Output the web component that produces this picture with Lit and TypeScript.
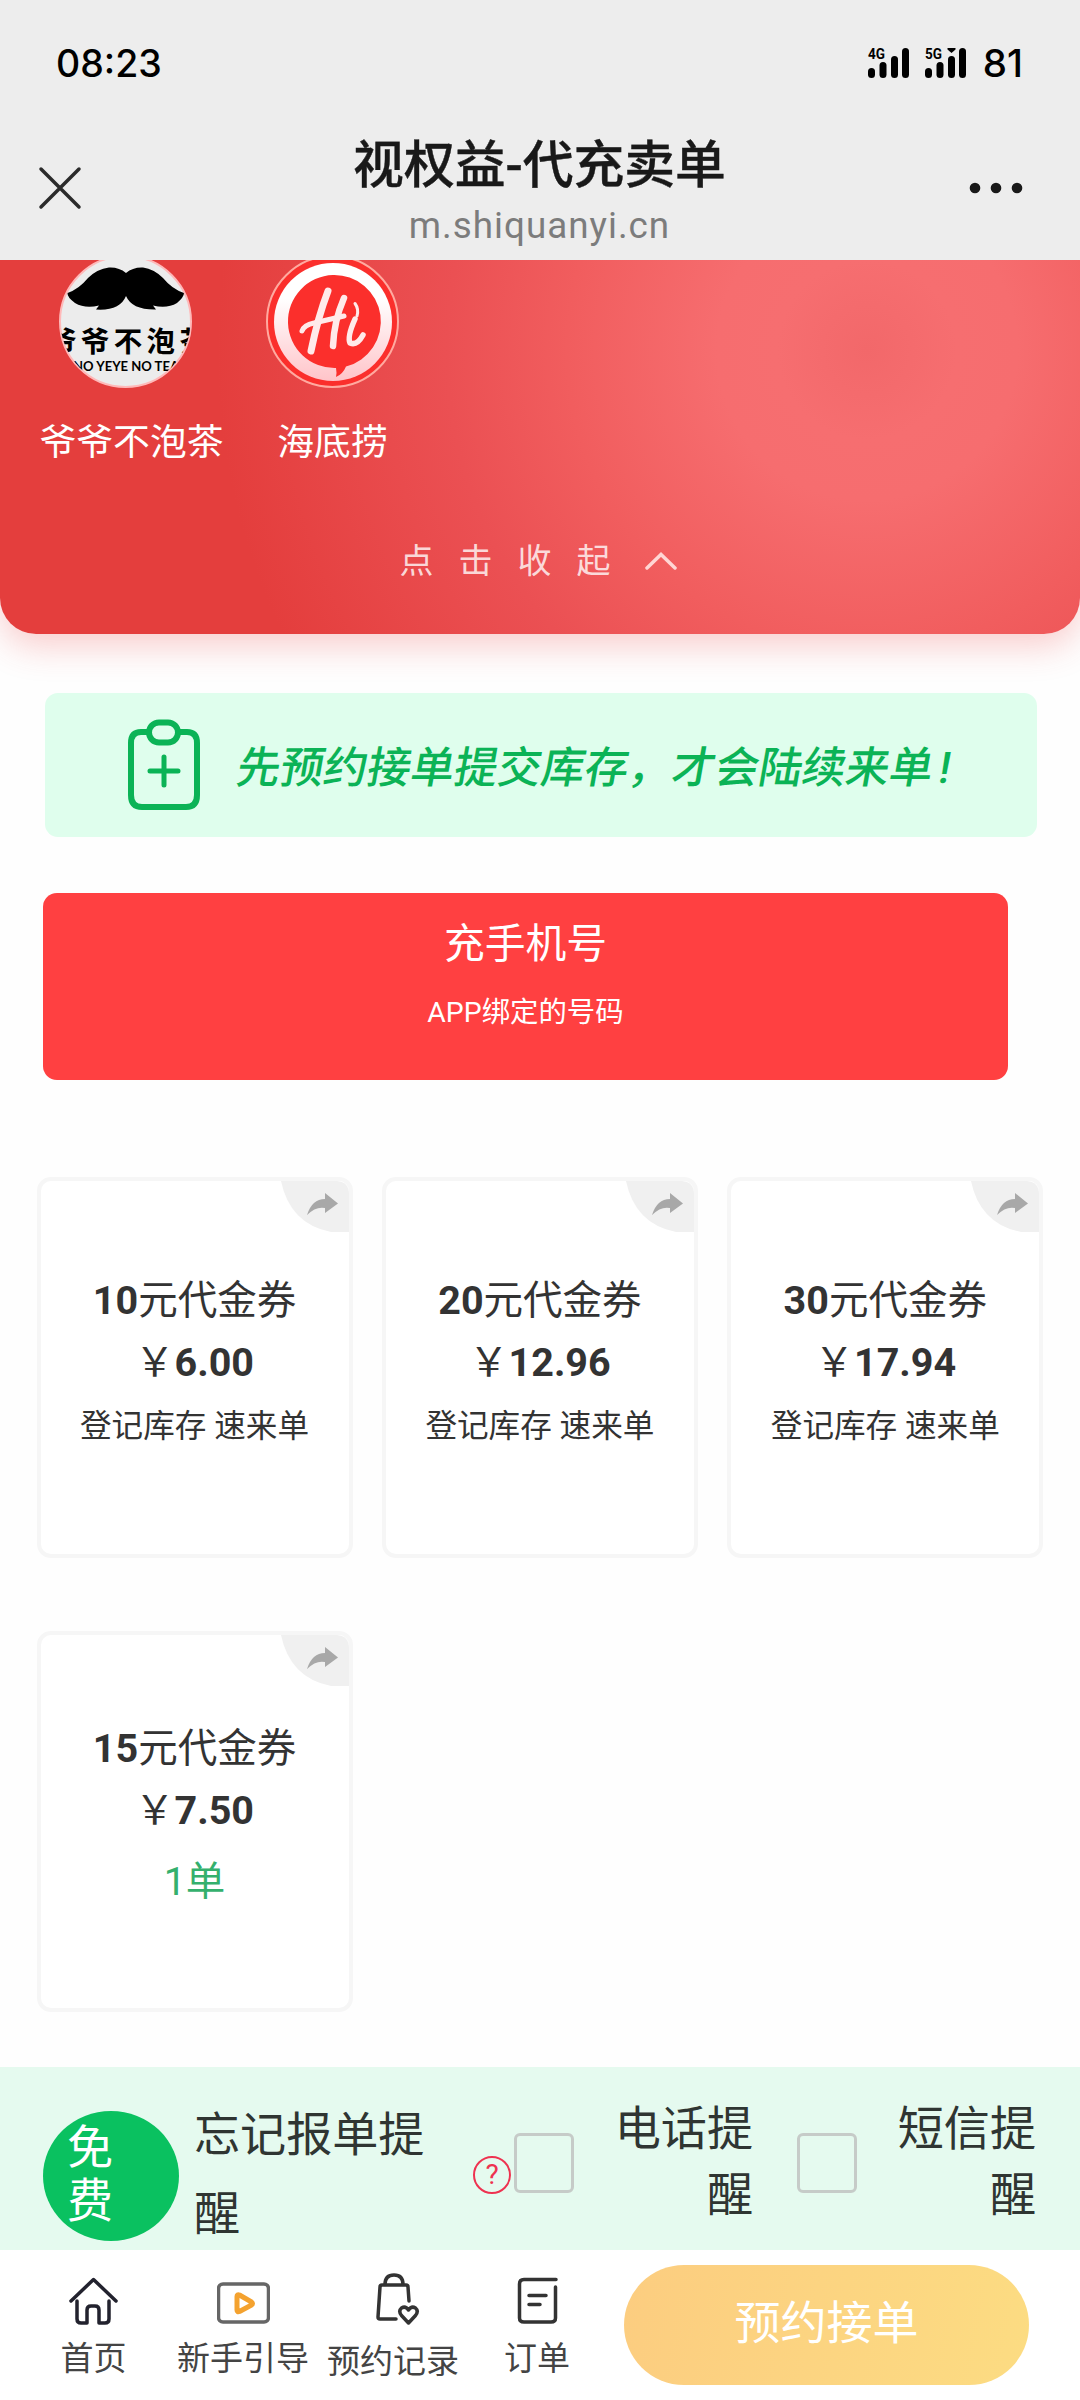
import { LitElement, html, css, svg, nothing } from 'lit';
import { customElement, property } from 'lit/decorators.js';

interface Voucher {
  amount: string;
  price: string;
  stock?: string;
}

const vouchers: Voucher[] = [
  { amount: '10', price: '6.00' },
  { amount: '20', price: '12.96' },
  { amount: '30', price: '17.94' },
  { amount: '15', price: '7.50', stock: '1单' },
];

const homeIcon = svg`
  <path d="M2 24 L24.5 2.500 L47 24" />
  <path d="M8 24 V42 Q8 46 12 46 H18 V33 Q18 29 22 29 H26 Q30 29 30 33 V46 H36 Q40 46 40 42 V24" />`;

const guideIcon = svg`
  <rect x="1.500" y="8" width="50" height="38" rx="4.500" stroke="#666" />
  <path d="M20 20.500 Q20 18 22.500 19 L34.500 26 Q36.500 27.500 34.500 29 L22.500 35.500 Q20 36.500 20 34 Z" stroke="#f4a22f" stroke-width="5" />`;

const bagIcon = svg`
  <path d="M9 11.500 Q9 2 18 2 Q27 2 27 11.500" />
  <path d="M33 28 L32 14 Q32 12 30 12 H6 Q4 12 4 14 L2 44 Q2 46 4 46 H20" />
  <path d="M32.500 50 L25.500 42.500 Q22 38 25.500 35 Q29.500 32.500 32.500 37 Q35.500 32.500 39.500 35 Q43 38 39.500 42.500 Z" />`;

const orderIcon = svg`
  <path d="M39 2.500 H7 Q2.500 2.500 2.500 7 V41 Q2.500 45 7 45 H34 Q38.500 45 38.500 41 V10" />
  <path d="M12 18.500 H29 M12 27.500 H23" />`;

@customElement('signal-bars')
export class SignalBars extends LitElement {
  @property() label = '';
  @property({ type: Boolean }) data = false;

  static styles = css`
    :host {
      display: block;
    }
    svg {
      display: block;
      overflow: visible;
    }
    text {
      font: bold 15.5px Roboto, sans-serif;
    }
  `;

  render() {
    return html`
      <svg width="42" height="31" viewBox="0 0 42 31">
        <text x="0" y="11" textLength="17" lengthAdjust="spacingAndGlyphs">${this.label}</text>
        <rect x="0" y="20" width="7" height="10" rx="3.500" />
        <rect x="11.500" y="14" width="7" height="16" rx="3.500" />
        <rect x="23" y="8" width="7" height="22" rx="3.500" />
        <rect x="34" y="0" width="7" height="30" rx="3.500" />
        ${this.data ? svg`<path d="M22.500 0 H30.500 V1.500 L26.500 5 L22.500 1.500 Z" />` : nothing}
      </svg>
    `;
  }
}

@customElement('voucher-card')
export class VoucherCard extends LitElement {
  @property() amount = '';
  @property() price = '';
  @property() stock?: string;

  static styles = css`
    :host {
      display: block;
    }
    .card {
      position: relative;
      box-sizing: border-box;
      height: 381px;
      display: flex;
      flex-direction: column;
      justify-content: center;
      padding-top: 3px;
      text-align: center;
      background: #fff;
      border: 4px solid #f6f6f6;
      border-radius: 14px;
      color: #333;
      font-size: 39.5px;
      line-height: 62px;
      white-space: nowrap;
    }
    .card div {
      height: 62px;
    }
    .card .note {
      height: 75px;
      font-size: 31.6px;
      line-height: 66px;
    }
    .card .stock {
      height: 86px;
      line-height: 80px;
      color: #34b06d;
    }
    .share {
      position: absolute;
      top: 0;
      right: 0;
    }
  `;

  render() {
    return html`
      <div class="card">
        <svg class="share" width="68" height="51" viewBox="0 0 68 51">
          <path d="M0 0 H56 Q68 1 68 13 V51 H50 Q9 43 0 0 Z" fill="#f0f0f0" />
          <path d="M26 34 Q31 18 44 18 V12 L57 22.500 L44 32 V27 Q35 25 26 34 Z" fill="#a8a8a8" />
        </svg>
        <div><b>${this.amount}</b>元代金券</div>
        <div>￥<b>${this.price}</b></div>
        ${this.stock
          ? html`<div class="stock">${this.stock}</div>`
          : html`<div class="note">登记库存 速来单</div>`}
      </div>
    `;
  }
}

@customElement('app-root')
export class AppRoot extends LitElement {
  static styles = css`
    :host {
      display: flex;
      flex-direction: column;
      width: 1080px;
      height: 2400px;
      overflow: hidden;
      background: #fefefe;
      font-family: Roboto, 'Noto Sans CJK SC', sans-serif;
      color: #333;
    }
    svg {
      display: block;
      flex: none;
    }
    .header {
      position: relative;
      z-index: 1;
      flex: none;
      height: 260px;
      background: #ededed;
    }
    .status {
      display: flex;
      align-items: center;
      height: 126px;
      padding: 0 57px 0 56px;
      font: 500 37.5px Inter, sans-serif;
      color: #000;
    }
    .time {
      flex: 1;
    }
    .status signal-bars {
      margin-right: 15.5px;
    }
    .battery {
      font-size: 38.5px;
    }
    .titlebar {
      display: flex;
      align-items: center;
      height: 124px;
      padding: 0 57px 0 38px;
    }
    .titles {
      flex: 1;
      text-align: center;
      padding: 9px 0 0 28px;
    }
    .title {
      font-size: 50.8px;
      font-weight: 500;
      line-height: 67px;
      color: #191919;
      -webkit-text-stroke: 0.4px #191919;
    }
    .domain {
      font: 36.8px/54px Roboto, sans-serif;
      letter-spacing: 1px;
      color: #7c7c7c;
    }
    .hero {
      flex: none;
      box-sizing: border-box;
      height: 374px;
      border-radius: 0 0 36px 36px;
      background: radial-gradient(circle at 867px 90px, #f2686a 0, #f66e70 90px, #f66d6f 150px, #f15d5e 300px, #eb5053 420px, #e43e3d 650px);
      box-shadow: 0 12px 34px rgba(235, 60, 60, 0.25);
    }
    .brands {
      display: flex;
      padding-left: 22px;
      height: 238px;
    }
    .brand {
      width: 207px;
      color: #fff;
    }
    .brand svg {
      margin: -5px auto 0;
    }
    .name {
      width: 172px;
      margin: 28px auto 0;
      font-size: 36.8px;
      line-height: 54px;
      text-align: center;
      white-space: nowrap;
    }
    .collapse {
      display: flex;
      align-items: center;
      justify-content: center;
      height: 126px;
      box-sizing: border-box;
      padding: 0 4px 0 0;
      margin-top: -3px;
      font-size: 34px;
      letter-spacing: 25px;
      color: rgba(255, 255, 255, 0.8);
    }
    .collapse svg {
      margin: 6px 0 0 9px;
    }
    .banner {
      flex: none;
      display: flex;
      align-items: center;
      box-sizing: border-box;
      width: 992px;
      height: 144px;
      margin: 59px 0 0 44.5px;
      padding-left: 82px;
      border-radius: 13px;
      background: #dffeed;
      color: #0bb356;
      font-size: 43.5px;
      font-weight: 500;
      white-space: nowrap;
    }
    .banner-text {
      margin: -1px 0 0 37px;
      transform: skewX(-10deg);
    }
    .mark {
      margin-left: 6px;
    }
    .mode {
      flex: none;
      box-sizing: border-box;
      width: 965px;
      height: 187px;
      margin: 56px 0 0 43px;
      padding-top: 20px;
      border-radius: 14px;
      background: #ff4041;
      color: #fff;
      text-align: center;
    }
    .mode-title {
      font-size: 40.8px;
      line-height: 62px;
    }
    .mode-note {
      font-size: 28.4px;
      line-height: 44px;
      margin-top: 16px;
    }
    .grid {
      display: grid;
      grid-template-columns: repeat(3, 316px);
      column-gap: 29.4px;
      row-gap: 73px;
      margin: 97px 0 0 36.5px;
    }
    .remind {
      flex: none;
      display: flex;
      box-sizing: border-box;
      height: 183px;
      margin-top: 55px;
      padding-left: 43px;
      background: #e5faef;
      font-size: 46.1px;
      color: #2f3532;
    }
    .free {
      box-sizing: border-box;
      width: 136px;
      height: 130px;
      margin-top: 44px;
      padding: 11px 60px 0 24px;
      border-radius: 50%;
      background: #0ac160;
      color: #fff;
      line-height: 52.5px;
    }
    .forgot {
      width: 240px;
      margin: 29px 0 0 15px;
      line-height: 79px;
    }
    .help {
      box-sizing: border-box;
      width: 38px;
      height: 38px;
      margin: 89px 0 0 39px;
      border: 2.5px solid #ee3250;
      border-radius: 50%;
      color: #ee3250;
      font-size: 28px;
      line-height: 34px;
      text-align: center;
    }
    .check {
      box-sizing: border-box;
      width: 60px;
      height: 60px;
      margin: 66px 0 0 3px;
      border: 3px solid #c6cbc8;
      border-radius: 6px;
    }
    .option {
      width: 140px;
      margin: 29px 0 0 39px;
      line-height: 66px;
      text-align: right;
    }
    .option + .check {
      margin-left: 44px;
    }
    .tabbar {
      flex: none;
      display: flex;
      height: 150px;
      background: #fff;
    }
    .tab {
      display: flex;
      flex-direction: column;
      align-items: center;
      padding-top: 23px;
      font-size: 33px;
      line-height: 50px;
      color: #444;
    }
    .tab svg {
      fill: none;
      stroke: #333;
      stroke-width: 3.5;
      stroke-linecap: round;
      stroke-linejoin: round;
      margin-bottom: 9px;
    }
    .tab.home {
      width: 187px;
    }
    .tab.home svg {
      stroke: #22222e;
    }
    .tab.guide {
      width: 112px;
      white-space: nowrap;
    }
    .tab.record {
      width: 188px;
      padding-top: 26px;
    }
    .tab.order {
      width: 100px;
    }
    .record svg {
      margin: -3px 0 12px 9px;
    }
    .submit {
      width: 405px;
      height: 120px;
      margin: 15px 0 0 37px;
      border-radius: 60px;
      background: linear-gradient(100deg, #fccd80, #fcdc82);
      color: #fff;
      font-size: 46px;
      line-height: 116px;
      text-align: center;
    }
  `;

  renderTeaLogo() {
    return html`
      <svg width="133" height="133" viewBox="0 0 133 133">
        <defs>
          <clipPath id="tea"><circle cx="66.500" cy="66.500" r="65" /></clipPath>
        </defs>
        <circle cx="66.500" cy="66.500" r="65.500" fill="#ececec" stroke="#ffb9b9" stroke-width="2" />
        <g clip-path="url(#tea)">
          <path d="M67 18 Q60 12 50 12.500 Q38 14 29 23 Q20 34 8.500 38 Q8 42 16 48 Q26 54 40 50.500 L37 54.500 Q61 56 67 41 Q73 55 97 54.500 L94 50.500 Q108 54 118 48 Q125 42 125 38 Q113 34 104 23 Q95 14 84 12.500 Q74 12 67 18 Z" />
          <text x="-11" y="97" font-size="28.500" font-weight="bold" textLength="160" font-family="Noto Sans CJK SC, sans-serif">爷爷不泡茶</text>
          <text x="14" y="116" font-size="13" font-weight="bold" textLength="106" lengthAdjust="spacingAndGlyphs" font-family="Lato, sans-serif">NO YEYE NO TEA</text>
        </g>
      </svg>
    `;
  }

  renderHiLogo() {
    return html`
      <svg width="133" height="133" viewBox="0 0 133 133">
        <defs>
          <linearGradient id="ring" x1="0" y1="0" x2="0" y2="1">
            <stop offset="0.300" stop-color="#fff" />
            <stop offset="1" stop-color="#ffc4c9" />
          </linearGradient>
        </defs>
        <circle cx="66.500" cy="66.500" r="65.500" fill="#fb2f2c" stroke="#ffaaa0" stroke-width="2" />
        <circle cx="67" cy="67" r="59" fill="url(#ring)" />
        <path d="M67 20 A46.500 46.500 0 0 1 80 111.500 Q77 119 70 122 Q71 118 70 113 A46.500 46.500 0 0 1 67 20 Z" fill="#fb2f2c" />
        <g fill="none" stroke="#ffeaea" stroke-linecap="round" stroke-linejoin="round">
          <path d="M62 36 Q52 62 45 96" stroke-width="7" />
          <path d="M78 43 Q68 66 67 91" stroke-width="6.500" />
          <path d="M36 76 Q38 70 48 68 L78 61" stroke-width="5" />
          <path d="M89 64 Q81 82 84 88 Q91 91 97 80" stroke-width="5.500" />
          <path d="M91 61 Q93 54 89 48.500" stroke-width="3" />
        </g>
      </svg>
    `;
  }

  renderHeader() {
    return html`
      <div class="header">
        <div class="status">
          <span class="time">08:23</span>
          <signal-bars label="4G"></signal-bars>
          <signal-bars label="5G" data></signal-bars>
          <span class="battery">81</span>
        </div>
        <div class="titlebar">
          <svg width="44" height="44" viewBox="0 0 44 44">
            <path d="M3 3 L41 41 M41 3 L3 41" stroke="#2b2b2b" stroke-width="3.500" stroke-linecap="round" />
          </svg>
          <div class="titles">
            <div class="title">视权益-代充卖单</div>
            <div class="domain">m.shiquanyi.cn</div>
          </div>
          <svg width="54" height="12" viewBox="0 0 54 12" fill="#191919">
            <circle cx="6" cy="6" r="5.300" />
            <circle cx="27" cy="6" r="5.300" />
            <circle cx="48" cy="6" r="5.300" />
          </svg>
        </div>
      </div>
    `;
  }

  render() {
    return html`
      ${this.renderHeader()}
      <div class="hero">
        <div class="brands">
          <div class="brand">
            ${this.renderTeaLogo()}
            <div class="name">爷爷不泡茶</div>
          </div>
          <div class="brand">
            ${this.renderHiLogo()}
            <div class="name">海底捞</div>
          </div>
        </div>
        <div class="collapse">
          点击收起
          <svg width="32" height="18" viewBox="0 0 32 18">
            <path d="M2 16 L16 2.500 L30 16" fill="none" stroke="#ffd6d4" stroke-width="3.500" stroke-linecap="round" />
          </svg>
        </div>
      </div>

      <div class="banner">
        <svg width="74" height="92" viewBox="0 0 74 92" fill="none" stroke="#0bb356" stroke-width="6">
          <path d="M22 13 H14 Q4 13 4 24 V76 Q4 88 15 88 H59 Q70 88 70 76 V24 Q70 13 60 13 H52" />
          <rect x="22" y="3.500" width="29" height="20" rx="10" />
          <path d="M23 52 H51 M37 38 V66" stroke-width="5" stroke-linecap="round" />
        </svg>
        <span class="banner-text">先预约接单提交库存，才会陆续来单<span class="mark">!</span></span>
      </div>

      <div class="mode">
        <div class="mode-title">充手机号</div>
        <div class="mode-note">APP绑定的号码</div>
      </div>

      <div class="grid">
        ${vouchers.map(
          (v) => html`<voucher-card .amount=${v.amount} .price=${v.price} .stock=${v.stock}></voucher-card>`
        )}
      </div>

      <div class="remind">
        <div class="free">免费</div>
        <div class="forgot">忘记报单提醒</div>
        <div class="help">?</div>
        <div class="check"></div>
        <div class="option">电话提醒</div>
        <div class="check"></div>
        <div class="option">短信提醒</div>
      </div>

      <div class="tabbar">
        <div class="tab home">
          <svg width="49" height="52" viewBox="0 -4 49 52">${homeIcon}</svg>
          首页
        </div>
        <div class="tab guide">
          <svg width="53" height="52" viewBox="0 -3 53 52">${guideIcon}</svg>
          新手引导
        </div>
        <div class="tab record">
          <svg width="44" height="52" viewBox="0 0 44 52">${bagIcon}</svg>
          预约记录
        </div>
        <div class="tab order">
          <svg width="41" height="52" viewBox="0 -4 41 52">${orderIcon}</svg>
          订单
        </div>
        <div class="submit">预约接单</div>
      </div>
    `;
  }
}
